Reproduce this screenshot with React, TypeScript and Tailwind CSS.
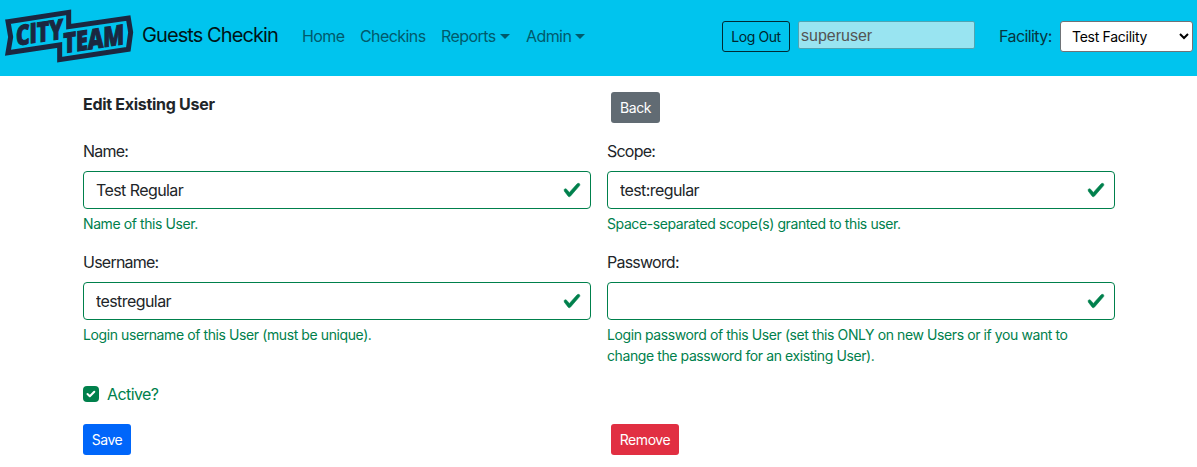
import type { ReactNode } from "react";

function Logo() {
  return (
    <svg className="h-[54px] w-[130px] shrink-0 overflow-visible" viewBox="12 28 390 162" aria-label="City Team">
      <path
        d="M24 66 L206 38 V81 L385 55 L392 98 L385 149 L179 180 V136 L24 159 L32 112 Z"
        fill="none"
        stroke="#1b2740"
        strokeWidth="15"
      />
      <g fill="#1b2740" stroke="#1b2740" strokeWidth="3" fontFamily="'Open Sans', sans-serif" fontWeight="800" fontSize="83">
        <text transform="translate(48 138) skewY(-8.6)" textLength="141" lengthAdjust="spacingAndGlyphs">CITY</text>
        <text transform="translate(190 161) skewY(-8.6)" textLength="182" lengthAdjust="spacingAndGlyphs">TEAM</text>
      </g>
    </svg>
  );
}

function Caret() {
  return <span className="ml-1 inline-block border-x-[5px] border-t-[5px] border-x-transparent border-t-current align-[3px]" />;
}

function Field({ id, label, value, help }: { id: string; label: string; value: string; help: string }) {
  return (
    <div>
      <label htmlFor={id} className="block tracking-[-0.048em]">{label}</label>
      <div className="mt-2 flex h-[38px] items-center rounded border border-[#00804c] bg-white pr-[9px] pl-3">
        <input id={id} defaultValue={value} className="min-w-0 flex-1 tracking-[-0.036em] outline-none" />
        <svg className="h-[18px] w-[18px]" viewBox="0 0 8 8" fill="#00804c" stroke="#00804c" strokeWidth="0.25">
          <path d="M2.3 6.73.6 4.53c-.4-1.04.46-1.4 1.1-.8l1.1 1.4 3.4-3.8c.6-.63 1.6-.27 1.2.7l-4 4.6c-.43.5-.8.4-1.1.1z" />
        </svg>
      </div>
      <p className="mt-1 text-sm/[21px] tracking-[-0.029em] text-[#00804c]">{help}</p>
    </div>
  );
}

function Button({ className, children }: { className: string; children: ReactNode }) {
  return (
    <button className={`h-[31px] rounded-[3px] text-sm/[21px] tracking-[-0.03em] whitespace-nowrap ${className}`}>{children}</button>
  );
}

export default function App() {
  return (
    <div className="h-[467px] w-[1197px] overflow-hidden bg-white font-['Inter','Liberation_Sans',sans-serif] text-base/6 tracking-[-0.036em] text-[#212529]">
      <nav className="flex h-[76px] items-start bg-[#00c4ee] pt-[9px] pr-1 pl-1">
        <Logo />
        <span className="mt-[11px] ml-2 w-[137px] text-xl/[30px] tracking-[-0.046em] whitespace-nowrap text-[#001418]">Guests Checkin</span>
        <div className="mt-[15px] ml-[23px] flex gap-4 whitespace-nowrap text-[#005a6c]">
          <a className="w-[42px]">Home</a>
          <a className="w-[65px]">Checkins</a>
          <a className="w-[69px]">Reports<Caret /></a>
          <a>Admin<Caret /></a>
        </div>
        <div className="mt-3 ml-auto flex items-start">
          <Button className="w-[68px] border border-[#002a33] text-[#00272f]">Log Out</Button>
          <input
            disabled
            value="superuser"
            className="ml-2 h-[28px] w-[177px] rounded-[2px] border border-[#4fa5b3] bg-[#99e4f1] px-[2px] pt-[2px] font-['Liberation_Sans',sans-serif] tracking-normal text-[#545454]"
          />
          <span className="mt-[3px] ml-6 w-[53px] whitespace-nowrap text-[#073540]">Facility:</span>
          <div className="ml-2 flex h-[31px] w-[133px] items-center justify-between rounded-[3px] border border-[#6f7377] bg-white pr-[3px] pl-[11px] text-sm text-black">
            <span className="tracking-[-0.02em]">Test Facility</span>
            <svg className="h-[7px] w-[10px]" viewBox="0 0 10 7" fill="none" stroke="currentColor" strokeWidth="2">
              <path d="M1 1 5 5 9 1" />
            </svg>
          </div>
        </div>
      </nav>

      <main className="mx-auto mt-4 w-[1031px]">
        <div className="grid grid-cols-[508px_508px] gap-x-4">
          <h1 className="font-bold tracking-[-0.018em]">Edit Existing User</h1>
          <div className="pl-1"><Button className="w-[49px] bg-[#616b73] text-white">Back</Button></div>
        </div>
        <form className="mt-4">
          <div className="grid grid-cols-[508px_508px] gap-x-4 gap-y-4">
            <Field id="name" label="Name:" value="Test Regular" help="Name of this User." />
            <Field id="scope" label="Scope:" value="test:regular" help="Space-separated scope(s) granted to this user." />
            <Field id="username" label="Username:" value="testregular" help="Login username of this User (must be unique)." />
            <Field
              id="password"
              label="Password:"
              value=""
              help="Login password of this User (set this ONLY on new Users or if you want to change the password for an existing User)."
            />
          </div>
          <div className="mt-4 flex h-6 items-center text-[#00804c]">
            <span className="flex h-4 w-4 items-center justify-center rounded bg-[#00804c]">
              <svg className="h-[10px] w-[10px]" viewBox="0 0 10 10" fill="none" stroke="white" strokeWidth="2" strokeLinecap="round" strokeLinejoin="round">
                <path d="m1.5 5 2.3 2.3L8.3 2.8" />
              </svg>
            </span>
            <span className="ml-2">Active?</span>
          </div>
          <div className="mt-[18px] grid grid-cols-[508px_508px] gap-x-4">
            <div><Button className="w-[48px] bg-[#0066fa] text-white">Save</Button></div>
            <div className="pl-1"><Button className="w-[68px] bg-[#e12f42] text-white">Remove</Button></div>
          </div>
        </form>
      </main>
    </div>
  );
}
